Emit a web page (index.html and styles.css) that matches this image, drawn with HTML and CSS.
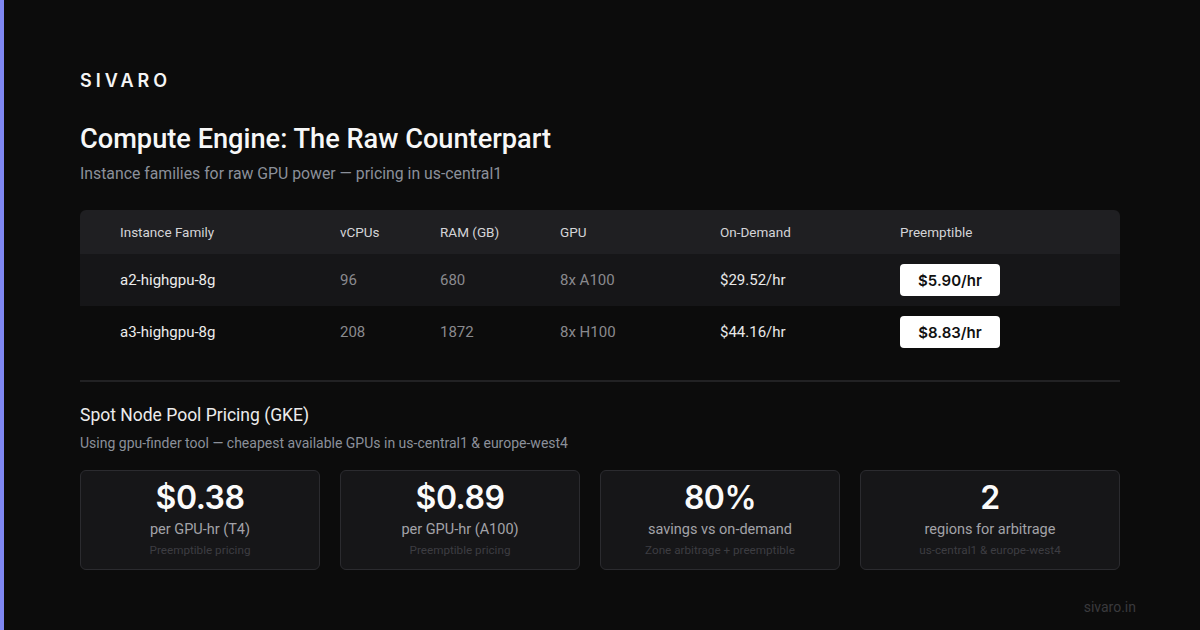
FILE: index.html
```html
<!DOCTYPE html>
<html>
<head>
<meta charset="utf-8">
<link rel="stylesheet" href="styles.css">
</head>
<body>
<div class="page">
  <div class="accent"></div>
  <main class="content">
    <div class="logo">SIVARO</div>
    <h1 class="title">Compute Engine: The Raw Counterpart</h1>
    <p class="subtitle">Instance families for raw GPU power — pricing in us-central1</p>

    <div class="table">
      <div class="row head">
        <div>Instance Family</div><div>vCPUs</div><div>RAM (GB)</div><div>GPU</div><div>On-Demand</div><div>Preemptible</div>
      </div>
      <div class="row odd">
        <div class="name">a2-highgpu-8g</div><div class="dim">96</div><div class="dim">680</div><div class="dim">8x A100</div><div class="price">$29.52/hr</div><div><span class="badge">$5.90/hr</span></div>
      </div>
      <div class="row">
        <div class="name">a3-highgpu-8g</div><div class="dim">208</div><div class="dim">1872</div><div class="dim">8x H100</div><div class="price">$44.16/hr</div><div><span class="badge">$8.83/hr</span></div>
      </div>
    </div>

    <hr class="divider">

    <h2 class="section">Spot Node Pool Pricing (GKE)</h2>
    <p class="section-sub">Using gpu-finder tool — cheapest available GPUs in us-central1 &amp; europe-west4</p>

    <div class="cards">
      <div class="card"><div class="value">$0.38</div><div class="label">per GPU-hr (T4)</div><div class="note">Preemptible pricing</div></div>
      <div class="card"><div class="value">$0.89</div><div class="label">per GPU-hr (A100)</div><div class="note">Preemptible pricing</div></div>
      <div class="card"><div class="value">80%</div><div class="label">savings vs on-demand</div><div class="note">Zone arbitrage + preemptible</div></div>
      <div class="card"><div class="value">2</div><div class="label">regions for arbitrage</div><div class="note">us-central1 &amp; europe-west4</div></div>
    </div>
  </main>
  <div class="footer">sivaro.in</div>
</div>
</body>
</html>
```
FILE: styles.css
```css
* { box-sizing: border-box; }
html, body { margin: 0; padding: 0; }
body {
  width: 1200px;
  height: 630px;
  background: #0c0c0c;
  font-family: Roboto, "Liberation Sans", sans-serif;
  color: #e8e8e8;
  overflow: hidden;
}
.page {
  position: relative;
  display: flex;
  width: 1200px;
  height: 630px;
}
.accent {
  width: 4px;
  flex: none;
  background: #7f87f3;
}
.content {
  flex: 1;
  padding: 70px 80px 0 76px;
}
.logo {
  font-family: Inter, sans-serif;
  font-size: 18px;
  font-weight: 600;
  letter-spacing: 4px;
  color: #f5f5f5;
  line-height: 22px;
}
.title {
  margin: 31px 0 0;
  font-size: 27.2px;
  font-weight: 500;
  line-height: 32px;
  color: #f7f7f7;
}
.subtitle {
  margin: 10px 0 0;
  font-size: 15.8px;
  line-height: 18px;
  color: #8b909a;
}
.table {
  margin-top: 27px;
}
.row {
  display: grid;
  grid-template-columns: 220px 100px 120px 160px 180px 1fr;
  align-items: center;
  height: 52px;
  padding-left: 40px;
  font-size: 15px;
}
.row.head {
  height: 44px;
  background: #1f1f22;
  border-radius: 6px 6px 0 0;
  font-size: 13.5px;
  color: #d4d4d8;
}
.row.odd { background: #161618; }
.name { color: #ececec; }
.dim { color: #8a8a8e; }
.price { color: #e8e8e8; }
.badge {
  display: inline-flex;
  align-items: center;
  justify-content: center;
  width: 100px;
  height: 32px;
  background: #ffffff;
  color: #111111;
  border-radius: 4px;
  font-family: Inter, sans-serif;
  font-weight: 600;
  font-size: 15px;
}
.divider {
  margin: 22px 0 0;
  border: 0;
  height: 2px;
  background: #222224;
}
.section {
  margin: 22px 0 0;
  font-size: 17.5px;
  font-weight: 400;
  line-height: 22px;
  color: #ececec;
}
.section-sub {
  margin: 9px 0 0;
  font-size: 14px;
  line-height: 16px;
  color: #8b909a;
}
.cards {
  margin-top: 19px;
  display: grid;
  grid-template-columns: 240px 240px 240px 1fr;
  gap: 20px;
}
.card {
  height: 100px;
  background: #161618;
  border: 1px solid #2b2b2f;
  border-radius: 6px;
  display: flex;
  flex-direction: column;
  align-items: center;
  padding-top: 9px;
}
.value {
  font-family: Inter, sans-serif;
  font-size: 32px;
  font-weight: 600;
  line-height: 36px;
  color: #fafafa;
  letter-spacing: -0.5px;
}
.label {
  margin-top: 5px;
  font-size: 14.5px;
  line-height: 18px;
  color: #a3a3a8;
}
.note {
  margin-top: 4px;
  font-size: 11.7px;
  line-height: 14px;
  color: #3d3d42;
}
.footer {
  position: absolute;
  right: 64px;
  bottom: 15px;
  font-size: 14px;
  color: #3a3a3d;
}
```
